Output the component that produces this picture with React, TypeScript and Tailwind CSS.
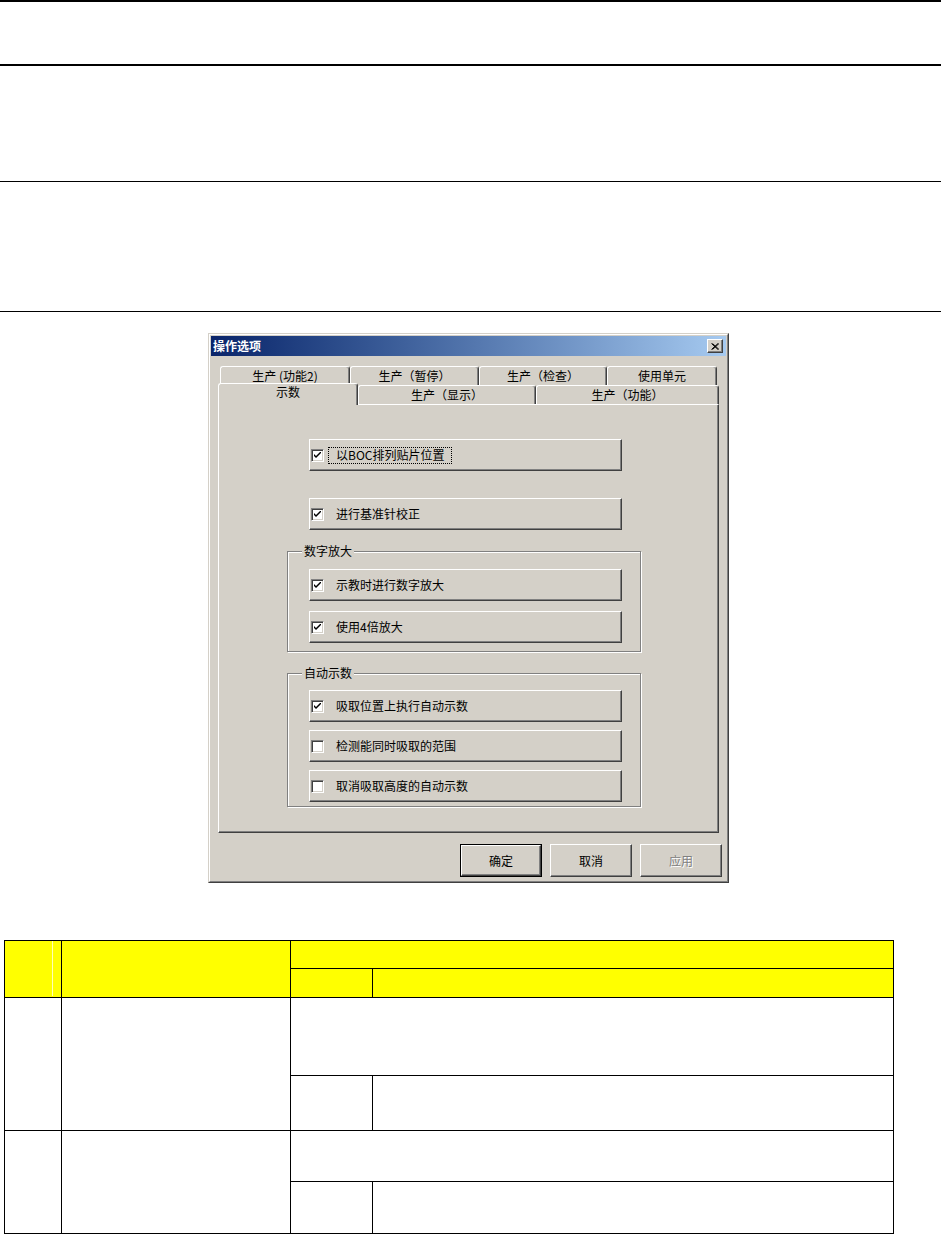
import React from "react";

const raised =
  "border border-t-white border-l-white border-r-[#404040] border-b-[#404040] shadow-[inset_-1px_-1px_0_#808080]";

function Check({ checked }: { checked: boolean }) {
  return (
    <div className="w-[13px] h-[13px] shrink-0 bg-white border border-t-[#808080] border-l-[#808080] border-r-white border-b-white shadow-[inset_1px_1px_0_#404040,inset_-1px_-1px_0_#d4d0c8] flex items-center justify-center">
      {checked && (
        <svg width="7" height="7" viewBox="0 0 7 7">
          <path d="M0 2 L0 4 L2 6 L7 1 L7 -1 L2 4 Z" fill="#000" />
        </svg>
      )}
    </div>
  );
}

function CheckButton({ label, checked, focus = false }: { label: string; checked: boolean; focus?: boolean }) {
  return (
    <div className={`w-[313px] h-[32px] flex items-center pl-px ${raised}`}>
      <Check checked={checked} />
      <div
        className={`ml-[4px] px-[7px] h-[17px] flex items-center border border-dotted ${
          focus ? "border-black" : "border-transparent"
        }`}
      >
        <span className="text-[12px] leading-[14px] text-black">{label}</span>
      </div>
    </div>
  );
}

function Group({ title, children, pt, pb, gap }: { title: string; children: React.ReactNode; pt: string; pb: string; gap: string }) {
  return (
    <div className={`relative w-[354px] border border-[#808080] shadow-[inset_1px_1px_0_white,1px_1px_0_white] pl-[21px] ${pt} ${pb} flex flex-col ${gap}`}>
      <div className="absolute left-[14px] top-[-9px] px-[2px] bg-[#d4d0c8] text-[12px] leading-[16px] text-black">
        {title}
      </div>
      {children}
    </div>
  );
}

function Tab({ w, label, tc = "" }: { w: string; label: string; tc?: string }) {
  return (
    <div
      className={`${w} h-[19px] shrink-0 rounded-t-[3px] border-t border-l border-r border-t-white border-l-white border-r-[#404040] shadow-[inset_-1px_0_0_#808080] flex items-center justify-center text-[12px] leading-[14px] text-black ${tc}`}
    >
      {label}
    </div>
  );
}

function Btn({ label, def = false, disabled = false }: { label: string; def?: boolean; disabled?: boolean }) {
  const inner = (
    <div className={`w-full h-full flex items-center justify-center ${raised}`}>
      <span
        className={`text-[12px] leading-[14px] ${
          disabled ? "text-[#808080] [text-shadow:1px_1px_0_#ffffff]" : "text-black"
        }`}
      >
        {label}
      </span>
    </div>
  );
  return def ? (
    <div className="w-[82px] h-[33px] border border-black">{inner}</div>
  ) : (
    <div className="w-[82px] h-[33px]">{inner}</div>
  );
}

function Dialog() {
  return (
    <div className="ml-[208px] mt-[21px] w-[521px] h-[550px] bg-[#d4d0c8] border border-t-[#d4d0c8] border-l-[#d4d0c8] border-r-[#404040] border-b-[#404040]">
      <div className="h-full border border-t-white border-l-white border-r-[#808080] border-b-[#808080] p-px flex flex-col">
        {/* title bar */}
        <div className="h-[20px] shrink-0 bg-linear-to-r from-[#0a246a] to-[#a6caf0] flex items-center justify-between pl-[2px] pr-[3px]">
          <span className="text-white font-bold text-[12px] leading-[14px]">操作选项</span>
          <div className={`w-[16px] h-[14px] bg-[#d4d0c8] flex items-center justify-center ${raised}`}>
            <svg width="8" height="7" viewBox="0 0 8 7">
              <path d="M0.5 0.5 L7 6.5 M1.5 0.5 L8 6.5 M7 0.5 L0.5 6.5 M8 0.5 L1.5 6.5" stroke="#000" strokeWidth="1" />
            </svg>
          </div>
        </div>

        {/* tabs */}
        <div className="mt-[10px] ml-[7px] w-[501px] flex flex-col">
          <div className="flex pl-[2px]">
            <Tab w="w-[130px]" label="生产 (功能2)" />
            <Tab w="w-[129px]" label="生产（暂停）" />
            <Tab w="w-[128px]" label="生产（检查）" />
            <Tab w="w-[110px]" label="使用单元" />
          </div>
          <div className="flex h-[19px] items-end">
            <div className="relative z-10 w-[140px] h-[22px] -mb-px shrink-0 bg-[#d4d0c8] rounded-t-[3px] border-t border-l border-r border-t-white border-l-white border-r-[#404040] shadow-[inset_-1px_0_0_#808080] flex justify-center pt-[1px] text-[12px] leading-[14px] text-black">
              示数
            </div>
            <Tab w="w-[178px]" label="生产（显示）" />
            <Tab w="w-[183px]" label="生产（功能）" />
          </div>
          {/* panel */}
          <div className="h-[429px] border border-t-white border-l-white border-r-[#404040] border-b-[#404040] shadow-[inset_-1px_-1px_0_#808080] pt-[34px] pl-[68px] flex flex-col">
            <div className="ml-[22px]">
              <CheckButton label="以BOC排列贴片位置" checked focus />
            </div>
            <div className="ml-[22px] mt-[27px]">
              <CheckButton label="进行基准针校正" checked />
            </div>
            <div className="mt-[21px]">
              <Group title="数字放大" pt="pt-[17px]" pb="pb-[8px]" gap="gap-[10px]">
                <CheckButton label="示教时进行数字放大" checked />
                <CheckButton label="使用4倍放大" checked />
              </Group>
            </div>
            <div className="mt-[21px]">
              <Group title="自动示数" pt="pt-[16px]" pb="pb-[4px]" gap="gap-[8px]">
                <CheckButton label="吸取位置上执行自动示数" checked />
                <CheckButton label="检测能同时吸取的范围" checked={false} />
                <CheckButton label="取消吸取高度的自动示数" checked={false} />
              </Group>
            </div>
          </div>
        </div>

        {/* buttons */}
        <div className="mt-[11px] flex justify-end gap-[8px] pr-[4px]">
          <Btn label="确定" def />
          <Btn label="取消" />
          <Btn label="应用" disabled />
        </div>
      </div>
    </div>
  );
}

function Table() {
  const b = "border border-black p-0";
  return (
    <table className="mt-[57px] ml-[4px] border-collapse table-fixed w-[889px]">
      <colgroup>
        <col className="w-[57px]" />
        <col className="w-[229px]" />
        <col className="w-[82px]" />
        <col className="w-[521px]" />
      </colgroup>
      <tbody>
        <tr className="h-[28px]">
          <td rowSpan={2} className={`${b} bg-[#ffff00] align-top`}>
            <div className="w-[48px] h-[55px] border-r border-[#ffffb8]" />
          </td>
          <td rowSpan={2} className={`${b} bg-[#ffff00]`} />
          <td colSpan={2} className={`${b} bg-[#ffff00]`} />
        </tr>
        <tr className="h-[29px]">
          <td className={`${b} bg-[#ffff00]`} />
          <td className={`${b} bg-[#ffff00]`} />
        </tr>
        <tr className="h-[78px]">
          <td rowSpan={2} className={b} />
          <td rowSpan={2} className={b} />
          <td colSpan={2} className={b} />
        </tr>
        <tr className="h-[55px]">
          <td className={b} />
          <td className={b} />
        </tr>
        <tr className="h-[51px]">
          <td rowSpan={2} className={b} />
          <td rowSpan={2} className={b} />
          <td colSpan={2} className={b} />
        </tr>
        <tr className="h-[52px]">
          <td className={b} />
          <td className={b} />
        </tr>
      </tbody>
    </table>
  );
}

export default function App() {
  return (
    <div className="w-[941px] min-h-[1235px] bg-white font-['Noto_Sans_CJK_SC','Liberation_Sans',sans-serif] overflow-hidden">
      <div className="h-[2px] bg-black" />
      <div className="mt-[62px] h-[2px] bg-black" />
      <div className="mt-[115px] h-px bg-black" />
      <div className="mt-[129px] h-px bg-black" />
      <Dialog />
      <Table />
    </div>
  );
}
